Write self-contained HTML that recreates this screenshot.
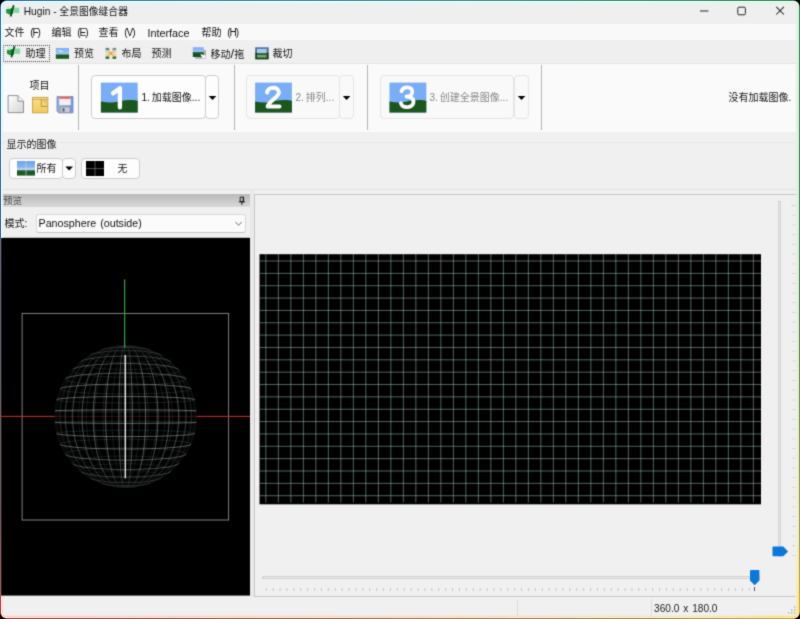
<!DOCTYPE html><html lang="zh"><head><meta charset="utf-8"><title>Hugin</title><style>
html,body{margin:0;padding:0;background:#000;}
body{width:800px;height:619px;overflow:hidden;position:relative;font-family:"Liberation Sans","Noto Sans CJK SC",sans-serif;}
#frame{position:absolute;left:0;top:0;width:800px;height:619px;border-radius:7px;overflow:hidden;
 background:
  linear-gradient(to right,#4a74b2,#5a87aa 25%,#58919a 50%,#559182 75%,#4c8f68) top/100% 3px no-repeat,
  linear-gradient(to right,#ac5450,#a55a50 12%,#a07d55 49%,#b09a56 84%,#d6b04a) bottom/100% 3px no-repeat,
  linear-gradient(to bottom,#4a74b2,#507da0 16%,#5a5a73 48%,#73505a 81%,#ac5450) left/3px 100% no-repeat,
  linear-gradient(to bottom,#4c8f68,#5f875f 48%,#aaa55a 88%,#d6b04a) right/3px 100% no-repeat,#777;}
#win{position:absolute;left:1px;top:1px;width:798px;height:617px;background:#f0f0f0;border-radius:6px;overflow:hidden;}
#c{position:absolute;left:-1px;top:-1px;width:800px;height:619px;background:#f0f0f0;will-change:transform;filter:url(#blr);}
.t{position:absolute;white-space:nowrap;line-height:1.3;word-spacing:1.1px;}
.cj{font-family:"Liberation Sans","Noto Sans CJK SC",sans-serif;}
</style></head><body><svg width="0" height="0" style="position:absolute"><filter id="blr" x="0" y="0" width="100%" height="100%" color-interpolation-filters="sRGB"><feConvolveMatrix order="3" kernelMatrix="1 4 1 4 20 4 1 4 1" divisor="40" edgeMode="duplicate" preserveAlpha="false"/></filter></svg><div id="frame"><div id="win"><div id="c"><div style="position:absolute;left:0px;top:0px;width:800px;height:24px;background:#efefef"></div><svg style="position:absolute;left:5px;top:5px;overflow:visible" width="15" height="13"><g transform="translate(0.8,0)"><rect x="7.6" y="2.7" width="5.9" height="5.3" fill="#86d8a2"/><path d="M0.3,4.2 L7.4,3.2 L7.2,8.6 L3.4,9.4 L0.4,8z" fill="#1d963a"/><path d="M4.5,3.6 L7.4,3.2 L7.2,8.6 L5,9z" fill="#0f7a2c"/><path d="M1.2,1.2 L5.4,2 L4.4,3.8 L1.4,3.6z" fill="#c4f0dc"/><path d="M7,0.1 L8.8,0.5 L5.7,11.8 L3.9,11.2z" fill="#0c4a1a"/></g></svg><div class="t" style="left:23.7px;top:4.5px;font-size:10.2px;color:#111;word-spacing:0;">Hugin - <span class="cj" style="font-size:9.8px">全景图像缝合器</span></div><svg style="position:absolute;left:699px;top:6px;overflow:visible" width="49" height="11"><path d="M1,5H9.4" stroke="#222" stroke-width="1"/><rect x="38.8" y="1.2" width="7.6" height="7.6" rx="1.2" fill="none" stroke="#222" stroke-width="1"/></svg><svg style="position:absolute;left:775px;top:6px;overflow:visible" width="10" height="10"><g transform="translate(0.8,0.4)"><path d="M0.5,0.5L8.1,8.1M8.1,0.5L0.5,8.1" stroke="#222" stroke-width="1.05"/></g></svg><div style="position:absolute;left:0px;top:24px;width:800px;height:15.5px;background:#f9f9f9"></div><div class="t" style="left:4.5px;top:25.5px;font-size:10px;color:#111;word-spacing:4px;line-height:14px;"><span class="cj">文件</span><span style="letter-spacing:-1.05px"> (F)</span></div><div class="t" style="left:51.5px;top:25.5px;font-size:10px;color:#111;word-spacing:4px;line-height:14px;"><span class="cj">编辑</span><span style="letter-spacing:-1.05px"> (E)</span></div><div class="t" style="left:98.5px;top:25.5px;font-size:10px;color:#111;word-spacing:4px;line-height:14px;"><span class="cj">查看</span><span style="letter-spacing:-1.05px"> (V)</span></div><div class="t" style="left:147.5px;top:25.5px;font-size:10.8px;color:#111;">Interface</div><div class="t" style="left:201.5px;top:25.5px;font-size:10px;color:#111;word-spacing:4px;line-height:14px;"><span class="cj">帮助</span><span style="letter-spacing:-1.05px"> (H)</span></div><div style="position:absolute;left:0px;top:39.5px;width:800px;height:24px;background:#efefef"></div><div style="position:absolute;left:3px;top:45px;width:46.8px;height:16.6px;border:1px dotted #4a4a4a;box-sizing:border-box"></div><svg style="position:absolute;left:6px;top:45px;overflow:visible" width="15" height="13"><g transform="translate(0.6,0.8)"><rect x="7.6" y="2.7" width="5.9" height="5.3" fill="#86d8a2"/><path d="M0.3,4.2 L7.4,3.2 L7.2,8.6 L3.4,9.4 L0.4,8z" fill="#1d963a"/><path d="M4.5,3.6 L7.4,3.2 L7.2,8.6 L5,9z" fill="#0f7a2c"/><path d="M1.2,1.2 L5.4,2 L4.4,3.8 L1.4,3.6z" fill="#c4f0dc"/><path d="M7,0.1 L8.8,0.5 L5.7,11.8 L3.9,11.2z" fill="#0c4a1a"/></g></svg><div class="t" style="left:25.5px;top:46.5px;font-size:10px;color:#111;"><span class="cj">助理</span></div><svg style="position:absolute;left:55px;top:48px;overflow:visible" width="15" height="11"><g transform="translate(0.8,0)"><defs><linearGradient id="sk55" x1="0" y1="0" x2="0" y2="1"><stop offset="0" stop-color="#79aef2"/><stop offset="1" stop-color="#a9cdf6"/></linearGradient></defs><rect width="13.2" height="6.98" fill="url(#sk55)"/><rect y="6.48" width="13.2" height="4.32" fill="#1b5a1f"/><path d="M2.5,2.5h3M4,3.6h3.5" stroke="#d8e8fb" stroke-width="0.9"/></g></svg><div class="t" style="left:74px;top:46.5px;font-size:10px;color:#111;"><span class="cj">预览</span></div><svg style="position:absolute;left:105px;top:47px;overflow:visible" width="12" height="13"><g transform="translate(0.3,0.7)"><rect x="0.2" y="0.4" width="10.8" height="10.6" fill="#f3ead0"/><rect x="0.3" y="2.4" width="3.6" height="6.4" fill="#d3e2b4"/><rect x="7.3" y="2.4" width="3.6" height="6.4" fill="#f2d4b6"/><rect x="0.3" y="0.2" width="3.6" height="2.3" fill="#5f7f9c"/><rect x="7.3" y="0.2" width="3.6" height="2.3" fill="#6f8fb4"/><rect x="0.3" y="8.7" width="3.6" height="2.5" fill="#3b6a2b"/><rect x="7.3" y="8.7" width="3.6" height="2.5" fill="#3b6a2b"/><path d="M2.6,2.8L8.6,8.6M8.6,2.8L2.6,8.6" stroke="#deb070" stroke-width="1.1"/><circle cx="5.6" cy="5.7" r="1.3" fill="#d4a058"/></g></svg><div class="t" style="left:121.5px;top:46.5px;font-size:10px;color:#111;"><span class="cj">布局</span></div><div class="t" style="left:151.5px;top:46.5px;font-size:10px;color:#111;"><span class="cj">预测</span></div><svg style="position:absolute;left:192px;top:47px;overflow:visible" width="15" height="12"><g transform="translate(0.8,0.3)"><rect x="2.4" y="2.6" width="10.8" height="8.9" fill="#9a9a9a" opacity="0.75"/><defs><linearGradient id="mv" x1="0" y1="0" x2="0" y2="1"><stop offset="0" stop-color="#7aa8f0"/><stop offset="1" stop-color="#a4c8f6"/></linearGradient></defs><rect width="10.9" height="5.4" fill="url(#mv)"/><rect y="5" width="10.9" height="4.7" fill="#16521c"/><rect y="5" width="10.9" height="1" fill="#2d6a4a"/><path d="M7.6,6.6 L12.6,8.2 L12.8,11 L10.4,11.2 L8.2,8.4z" fill="#f4fbf6"/></g></svg><div class="t" style="left:210.5px;top:46.5px;font-size:13px;color:#111;line-height:13px;"><span class="cj" style="font-size:10px">移动</span>/<span class="cj" style="font-size:10px">拖</span></div><svg style="position:absolute;left:255px;top:47px;overflow:visible" width="14" height="13"><g transform="translate(0.2,0.3)"><rect width="13.5" height="5.6" fill="#4f6f9f"/><rect y="5.4" width="13.5" height="6.7" fill="#173d17"/><rect x="1.8" y="1.6" width="9.6" height="4.4" fill="#a9c9f7"/><rect x="1.8" y="5.8" width="9.6" height="2.2" fill="#2f6a35"/><rect x="1.8" y="7.8" width="9.6" height="2.5" fill="#7aa87a"/></g></svg><div class="t" style="left:272.5px;top:46.5px;font-size:10px;color:#111;"><span class="cj">裁切</span></div><div style="position:absolute;left:2px;top:62.7px;width:794px;height:69.8px;background:#fafafa;border-top:1px solid #e4e4e4;box-sizing:border-box;border-radius:3px 0 0 0"></div><div style="position:absolute;left:78.1px;top:65px;width:1px;height:65px;background:#b4b4b4"></div><div style="position:absolute;left:233.5px;top:65px;width:1px;height:65px;background:#b4b4b4"></div><div style="position:absolute;left:367px;top:65px;width:1px;height:65px;background:#b4b4b4"></div><div style="position:absolute;left:540.8px;top:65px;width:1px;height:65px;background:#b4b4b4"></div><div class="t" style="left:29.5px;top:79px;font-size:10px;color:#111;"><span class="cj">项目</span></div><svg style="position:absolute;left:7px;top:95px;overflow:visible" width="18" height="19"><g transform="translate(0.5,0)"><defs><linearGradient id="ng" x1="0" y1="0" x2="1" y2="1"><stop offset="0" stop-color="#ffffff"/><stop offset="1" stop-color="#d4d4d4"/></linearGradient></defs><path d="M0.6,0.6 H10.5 L16,6.2 V17.6 H0.6z" fill="url(#ng)" stroke="#8f8f8f" stroke-width="1"/><path d="M10.5,0.6 V6.2 H16" fill="#f4f4f4" stroke="#8f8f8f" stroke-width="1"/></g></svg><svg style="position:absolute;left:32px;top:96px;overflow:visible" width="17" height="18"><g transform="translate(0,0.8)"><defs><linearGradient id="og" x1="0" y1="0" x2="0" y2="1"><stop offset="0" stop-color="#fbe08a"/><stop offset="1" stop-color="#f0c95c"/></linearGradient></defs><rect x="0.6" y="0.6" width="15.2" height="15.4" fill="url(#og)" stroke="#c7a44c" stroke-width="1"/><path d="M0.6,2.6H15.8" stroke="#c7a44c" stroke-width="0.9"/><path d="M9.3,2.6 V9.6 H15.8" fill="none" stroke="#b8953f" stroke-width="1"/><path d="M9.8,3.1 L15.3,9.1 V3.1z" fill="#e6c568"/></g></svg><svg style="position:absolute;left:56px;top:96px;overflow:visible" width="18" height="18"><g transform="translate(0.5,0)"><defs><linearGradient id="sg" x1="0" y1="0" x2="1" y2="0"><stop offset="0" stop-color="#9ab0dc"/><stop offset="1" stop-color="#6f97e6"/></linearGradient></defs><path d="M0.6,0.6 H16.4 V16.8 H2.2 L0.6,15.2z" fill="url(#sg)" stroke="#6d86b8" stroke-width="1"/><rect x="2.8" y="0.6" width="11.4" height="8.6" fill="#f6eef0"/><rect x="2.8" y="0.6" width="11.4" height="2.2" fill="#e0605f"/><rect x="3.8" y="11" width="9.6" height="5.6" fill="#c9ccd4" stroke="#8a8e9a" stroke-width="0.6"/><rect x="6" y="12.2" width="2" height="3.4" fill="#555a66"/></g></svg><div style="position:absolute;left:91.4px;top:75px;width:114.2px;height:44.4px;background:#fdfdfd;border:1px solid #cecece;border-radius:4px;box-sizing:border-box"></div><div style="position:absolute;left:205.1px;top:75px;width:14.3px;height:44.4px;background:#fdfdfd;border:1px solid #cecece;border-radius:4px;box-sizing:border-box"></div><svg style="position:absolute;left:100px;top:82px;overflow:visible" width="38" height="31"><g transform="translate(0.9,0.6)"><rect width="36.8" height="30" fill="#79adf7"/><path d="M0,18.9 C4,19.5 8,20.3 12,19.8 C18,19 24,17.3 30,17.5 C33,17.6 35,17.9 36.8,18.2 V30 H0z" fill="#1b561d"/><path d="M12.3,10.7 L19,5.7 V24.6" fill="none" stroke="#fff" stroke-width="4.4" stroke-linecap="round" stroke-linejoin="round"/></g></svg><div class="t" style="left:141.5px;top:91px;font-size:10px;color:#111;word-spacing:-0.8px;">1. <span class="cj">加载图像</span>...</div><svg style="position:absolute;left:208px;top:96px;overflow:visible" width="9" height="4"><g transform="translate(0.7,0)"><path d="M0,0H7.6L3.8,3.9z" fill="#000"/></g></svg><div style="position:absolute;left:245.6px;top:75px;width:94px;height:44.4px;background:#f9f9f9;border:1px solid #e5e5e5;border-radius:4px;box-sizing:border-box"></div><div style="position:absolute;left:339.1px;top:75px;width:14.5px;height:44.4px;background:#f9f9f9;border:1px solid #e5e5e5;border-radius:4px;box-sizing:border-box"></div><svg style="position:absolute;left:255px;top:82px;overflow:visible" width="37" height="31"><g transform="translate(0.1,0.6)"><rect width="36.8" height="30" fill="#79adf7"/><path d="M0,18.9 C4,19.5 8,20.3 12,19.8 C18,19 24,17.3 30,17.5 C33,17.6 35,17.9 36.8,18.2 V30 H0z" fill="#1b561d"/><path d="M12,10 C12.3,4 23.6,3.2 23.8,9.8 C23.9,14.4 13.3,18.6 12.5,24 H24.4" fill="none" stroke="#fff" stroke-width="4" stroke-linecap="round" stroke-linejoin="round"/></g></svg><div class="t" style="left:295.5px;top:91px;font-size:10px;color:#888;word-spacing:-0.8px;">2. <span class="cj">排列</span>...</div><svg style="position:absolute;left:342px;top:96px;overflow:visible" width="9" height="4"><g transform="translate(0.8,0)"><path d="M0,0H7.6L3.8,3.9z" fill="#000"/></g></svg><div style="position:absolute;left:380px;top:75px;width:134.3px;height:44.4px;background:#f9f9f9;border:1px solid #e5e5e5;border-radius:4px;box-sizing:border-box"></div><div style="position:absolute;left:513.8px;top:75px;width:15px;height:44.4px;background:#f9f9f9;border:1px solid #e5e5e5;border-radius:4px;box-sizing:border-box"></div><svg style="position:absolute;left:389px;top:82px;overflow:visible" width="38" height="31"><g transform="translate(0.5,0.6)"><rect width="36.8" height="30" fill="#79adf7"/><path d="M0,18.9 C4,19.5 8,20.3 12,19.8 C18,19 24,17.3 30,17.5 C33,17.6 35,17.9 36.8,18.2 V30 H0z" fill="#1b561d"/><path d="M12,8.6 C13.5,3.3 23,3.2 22.8,9.4 C22.6,13 19,13.9 17,13.9 C20,13.9 24.2,15.2 24,19.6 C23.7,25.7 13,26.1 11.4,20.6" fill="none" stroke="#fff" stroke-width="3.8" stroke-linecap="round" stroke-linejoin="round"/></g></svg><div class="t" style="left:429.5px;top:91px;font-size:10px;color:#888;word-spacing:-0.8px;">3. <span class="cj">创建全景图像</span>...</div><svg style="position:absolute;left:517px;top:96px;overflow:visible" width="9" height="4"><g transform="translate(0.75,0)"><path d="M0,0H7.6L3.8,3.9z" fill="#000"/></g></svg><div class="t" style="left:728.5px;top:90.5px;font-size:10px;color:#111;"><span class="cj">没有加载图像</span>.</div><div style="position:absolute;left:2px;top:142px;width:794px;height:1px;background:#e6e6e6"></div><div style="position:absolute;left:2px;top:188.5px;width:794px;height:1px;background:#e2e2e2"></div><div class="t" style="left:6.5px;top:137.5px;font-size:10px;color:#111;background:#f0f0f0;padding-right:2px;"><span class="cj">显示的图像</span></div><div style="position:absolute;left:9px;top:157.6px;width:53.6px;height:21.6px;background:#fdfdfd;border:1px solid #cdcdcd;border-radius:4px;box-sizing:border-box"></div><div style="position:absolute;left:62.2px;top:157.6px;width:13.8px;height:21.6px;background:#fdfdfd;border:1px solid #cdcdcd;border-radius:4px;box-sizing:border-box"></div><div style="position:absolute;left:80.6px;top:157.6px;width:59.6px;height:21.6px;background:#fdfdfd;border:1px solid #cdcdcd;border-radius:4px;box-sizing:border-box"></div><svg style="position:absolute;left:17px;top:161px;overflow:visible" width="19" height="15"><defs><linearGradient id="ag" x1="0" y1="0" x2="0" y2="1"><stop offset="0" stop-color="#6fa2ee"/><stop offset="0.6" stop-color="#86b4f2"/><stop offset="1" stop-color="#bcd6f6"/></linearGradient></defs><rect width="18" height="9.5" fill="url(#ag)"/><rect y="9.3" width="18" height="5.3" fill="#1b5a1f"/><path d="M9,0V14.6M0,7.6H18" stroke="#cfd8e4" stroke-width="0.8" opacity="0.8"/></svg><div class="t" style="left:36.6px;top:162px;font-size:10px;color:#111;"><span class="cj">所有</span></div><svg style="position:absolute;left:65px;top:166px;overflow:visible" width="9" height="5"><g transform="translate(0.3,0.5)"><path d="M0,0H7.8L3.9,4.1z" fill="#000"/></g></svg><svg style="position:absolute;left:86px;top:161px;overflow:visible" width="19" height="16"><rect width="18" height="15" fill="#000"/><path d="M9,0V15M0,7.6H18" stroke="#6a6a6a" stroke-width="0.8"/></svg><div class="t" style="left:117.5px;top:162px;font-size:10px;color:#111;"><span class="cj">无</span></div><div style="position:absolute;left:1px;top:193.8px;width:249px;height:13.6px;background:linear-gradient(#b9b9b9,#d9d9d9)"></div><div class="t" style="left:3px;top:195px;font-size:9.6px;color:#505050;"><span class="cj">预览</span></div><svg style="position:absolute;left:238px;top:196px;overflow:visible" width="9" height="10"><g transform="translate(0,0.5)"><path d="M2.2,0.6H5.6V5.2H2.2zM0.8,5.4H7M3.9,5.4V8.6M5.2,0.6V5.2" fill="none" stroke="#111" stroke-width="0.9"/></g></svg><div class="t" style="left:4.5px;top:217px;font-size:10px;color:#111;"><span class="cj">模式</span>:</div><div style="position:absolute;left:36px;top:213.5px;width:209.5px;height:19.6px;background:#fbfbfb;border:1px solid #dadada;border-bottom-color:#c4c4c4;border-radius:3px;box-sizing:border-box"></div><div class="t" style="left:38.5px;top:217.3px;font-size:10.7px;color:#111;">Panosphere (outside)</div><svg style="position:absolute;left:235px;top:221px;overflow:visible" width="8" height="5"><g transform="translate(0,0.5)"><path d="M0.4,0.5L3.6,3.7L6.8,0.5" fill="none" stroke="#555" stroke-width="0.9"/></g></svg><svg style="position:absolute;left:1px;top:237px;overflow:visible" width="250" height="359"><g transform="translate(0,0.8)"><defs><radialGradient id="rg" gradientUnits="userSpaceOnUse" cx="125.6" cy="416.6" r="70.9636"><stop offset="0.00" stop-color="#fff" stop-opacity="1.00"/><stop offset="0.10" stop-color="#fff" stop-opacity="0.99"/><stop offset="0.20" stop-color="#fff" stop-opacity="0.98"/><stop offset="0.30" stop-color="#fff" stop-opacity="0.95"/><stop offset="0.40" stop-color="#fff" stop-opacity="0.92"/><stop offset="0.50" stop-color="#fff" stop-opacity="0.87"/><stop offset="0.60" stop-color="#fff" stop-opacity="0.80"/><stop offset="0.70" stop-color="#fff" stop-opacity="0.71"/><stop offset="0.80" stop-color="#fff" stop-opacity="0.60"/><stop offset="0.90" stop-color="#fff" stop-opacity="0.44"/><stop offset="1.00" stop-color="#fff" stop-opacity="0.10"/></radialGradient><linearGradient id="lg" gradientUnits="userSpaceOnUse" x1="0" y1="345.636" x2="0" y2="487.564"><stop offset="0.00" stop-color="#fff" stop-opacity="0.22"/><stop offset="0.06" stop-color="#fff" stop-opacity="0.48"/><stop offset="0.12" stop-color="#fff" stop-opacity="0.66"/><stop offset="0.19" stop-color="#fff" stop-opacity="0.78"/><stop offset="0.25" stop-color="#fff" stop-opacity="0.87"/><stop offset="0.31" stop-color="#fff" stop-opacity="0.93"/><stop offset="0.38" stop-color="#fff" stop-opacity="0.97"/><stop offset="0.44" stop-color="#fff" stop-opacity="0.99"/><stop offset="0.50" stop-color="#fff" stop-opacity="1.00"/><stop offset="0.56" stop-color="#fff" stop-opacity="0.99"/><stop offset="0.62" stop-color="#fff" stop-opacity="0.97"/><stop offset="0.69" stop-color="#fff" stop-opacity="0.93"/><stop offset="0.75" stop-color="#fff" stop-opacity="0.87"/><stop offset="0.81" stop-color="#fff" stop-opacity="0.78"/><stop offset="0.88" stop-color="#fff" stop-opacity="0.66"/><stop offset="0.94" stop-color="#fff" stop-opacity="0.48"/><stop offset="1.00" stop-color="#fff" stop-opacity="0.22"/></linearGradient><mask id="mr" maskUnits="userSpaceOnUse" x="40" y="330" width="180" height="180"><rect x="40" y="330" width="180" height="180" fill="url(#rg)"/></mask><mask id="ml" maskUnits="userSpaceOnUse" x="40" y="330" width="180" height="180"><rect x="40" y="330" width="180" height="180" fill="url(#lg)"/></mask></defs><rect width="249" height="357.8" fill="#000"/><g transform="translate(-1,-237.8)"><rect x="22.1" y="313.4" width="206.5" height="206.6" fill="none" stroke="#8c8c8c" stroke-width="0.9"/><path d="M0,416.4H54.5M196.5,416.4H250" stroke="#d42a2a" stroke-width="1"/><path d="M54.5,416.4H196.5" stroke="#7a1616" stroke-width="1" opacity="0.5"/><path d="M124.7,279.4V347.5" stroke="#3fc33f" stroke-width="1"/><path d="M124.7,347.5V416" stroke="#1f5a1f" stroke-width="1" opacity="0.4"/><g fill="none" stroke="#cfe4dd"><g mask="url(#ml)"><path d="M125.6,485.0 125.2,485.0 124.8,485.0 124.3,485.0 123.9,485.0 123.5,485.1 123.2,485.1 122.8,485.1 122.4,485.2 122.1,485.2 121.8,485.3 121.5,485.3 121.2,485.4 121.0,485.5 120.8,485.5 120.6,485.6 120.4,485.7 120.3,485.8 120.2,485.9 120.2,485.9 120.1,486.0 120.1,486.1 120.2,486.2 120.3,486.3 120.4,486.3 120.5,486.4 120.7,486.5 120.9,486.6 121.1,486.6 121.4,486.7 121.7,486.8 122.0,486.8 122.3,486.9 122.7,486.9 123.1,487.0 123.5,487.0 123.9,487.0 124.3,487.1 124.7,487.1 125.2,487.1 125.6,487.1 126.0,487.1 126.5,487.1 126.9,487.1 127.3,487.0 127.7,487.0 128.1,487.0 128.5,486.9 128.9,486.9 129.2,486.8 129.5,486.8 129.8,486.7 130.1,486.6 130.3,486.6 130.5,486.5 130.7,486.4 130.8,486.3 130.9,486.3 131.0,486.2 131.1,486.1 131.1,486.0 131.0,485.9 131.0,485.9 130.9,485.8 130.8,485.7 130.6,485.6 130.4,485.5 130.2,485.5 130.0,485.4 129.7,485.3 129.4,485.3 129.1,485.2 128.8,485.2 128.4,485.1 128.0,485.1 127.7,485.1 127.3,485.0 126.9,485.0 126.4,485.0 126.0,485.0 125.6,485.0M125.6,481.4 124.4,481.4 123.2,481.4 122.0,481.5 120.8,481.5 119.6,481.6 118.5,481.7 117.4,481.8 116.4,481.9 115.4,482.1 114.5,482.2 113.6,482.4 112.8,482.6 112.1,482.8 111.4,483.0 110.8,483.2 110.4,483.4 110.0,483.6 109.7,483.8 109.5,484.1 109.3,484.3 109.3,484.5 109.4,484.8 109.6,485.0 109.9,485.3 110.3,485.5 110.8,485.7 111.4,485.9 112.1,486.1 112.9,486.3 113.7,486.5 114.7,486.7 115.7,486.9 116.8,487.0M135.5,486.9 136.5,486.7 137.5,486.5 138.3,486.3 139.1,486.1 139.8,485.9 140.4,485.7 140.9,485.5 141.3,485.3 141.6,485.0 141.8,484.8 141.9,484.5 141.9,484.3 141.7,484.1 141.5,483.8 141.2,483.6 140.8,483.4 140.4,483.2 139.8,483.0 139.1,482.8 138.4,482.6 137.6,482.4 136.7,482.2 135.8,482.1 134.8,481.9 133.8,481.8 132.7,481.7 131.6,481.6 130.4,481.5 129.2,481.5 128.0,481.4 126.8,481.4 125.6,481.4M125.6,476.5 123.7,476.5 121.7,476.6 119.8,476.6 117.9,476.7 116.1,476.8 114.2,477.0 112.5,477.1 110.8,477.3 109.2,477.5 107.7,477.7 106.3,478.0 104.9,478.3 103.7,478.5 102.6,478.8 101.7,479.2 100.8,479.5 100.1,479.8 99.6,480.2 99.2,480.6 99.0,480.9 98.9,481.3 99.0,481.7 99.2,482.1 99.7,482.4 100.3,482.8 101.0,483.2 102.0,483.5M150.2,483.2 150.9,482.8 151.5,482.4 152.0,482.1 152.2,481.7 152.3,481.3 152.2,480.9 152.0,480.6 151.6,480.2 151.1,479.8 150.4,479.5 149.5,479.2 148.6,478.8 147.5,478.5 146.3,478.3 144.9,478.0 143.5,477.7 142.0,477.5 140.4,477.3 138.7,477.1 137.0,477.0 135.1,476.8 133.3,476.7 131.4,476.6 129.5,476.6 127.5,476.5 125.6,476.5M125.6,470.5 123.0,470.6 120.4,470.6 117.9,470.7 115.3,470.8 112.9,470.9 110.4,471.1 108.1,471.3 105.8,471.5 103.7,471.8 101.6,472.0 99.6,472.3 97.8,472.7 96.1,473.0 94.6,473.4 93.2,473.8 92.0,474.2 91.0,474.6 90.2,475.1 89.6,475.5 89.2,476.0 89.0,476.4 89.1,476.9 89.4,477.4 89.9,477.9 90.6,478.4M161.3,477.9 161.8,477.4 162.1,476.9 162.2,476.4 162.0,476.0 161.6,475.5 161.0,475.1 160.2,474.6 159.2,474.2 158.0,473.8 156.6,473.4 155.1,473.0 153.4,472.7 151.6,472.3 149.6,472.0 147.5,471.8 145.4,471.5 143.1,471.3 140.8,471.1 138.3,470.9 135.9,470.8 133.3,470.7 130.8,470.6 128.2,470.6 125.6,470.5M125.6,463.7 122.4,463.7 119.3,463.7 116.2,463.8 113.1,463.9 110.1,464.1 107.1,464.2 104.2,464.4 101.5,464.7 98.8,464.9 96.2,465.2 93.8,465.6 91.5,465.9 89.4,466.3 87.5,466.7 85.7,467.1 84.2,467.6 82.9,468.0 81.8,468.5 81.0,469.0 80.4,469.6 80.1,470.1 80.0,470.6 80.3,471.1 80.9,471.7M170.9,471.1 171.2,470.6 171.1,470.1 170.8,469.6 170.2,469.0 169.4,468.5 168.3,468.0 167.0,467.6 165.5,467.1 163.7,466.7 161.8,466.3 159.7,465.9 157.4,465.6 155.0,465.2 152.4,464.9 149.7,464.7 147.0,464.4 144.1,464.2 141.1,464.1 138.1,463.9 135.0,463.8 131.9,463.7 128.8,463.7 125.6,463.7M125.6,456.0 122.0,456.1 118.4,456.1 114.8,456.2 111.2,456.3 107.8,456.4 104.3,456.6 101.0,456.8 97.8,457.0 94.7,457.3 91.7,457.6 88.8,457.9 86.2,458.2 83.7,458.6 81.4,459.0 79.3,459.4 77.4,459.9 75.8,460.3 74.5,460.8 73.4,461.3 72.6,461.8 72.2,462.3 72.1,462.9 72.3,463.4 72.9,464.0M178.9,463.4 179.1,462.9 179.0,462.3 178.6,461.8 177.8,461.3 176.7,460.8 175.4,460.3 173.8,459.9 171.9,459.4 169.8,459.0 167.5,458.6 165.0,458.2 162.4,457.9 159.5,457.6 156.5,457.3 153.4,457.0 150.2,456.8 146.9,456.6 143.4,456.4 140.0,456.3 136.4,456.2 132.8,456.1 129.2,456.1 125.6,456.0M125.6,447.8 121.6,447.9 117.6,447.9 113.6,448.0 109.7,448.1 105.9,448.2 102.1,448.3 98.4,448.5 94.8,448.7 91.3,448.9 88.0,449.2 84.8,449.5 81.8,449.8 79.0,450.1 76.4,450.5 74.0,450.8 71.9,451.2 70.0,451.6 68.4,452.1 67.2,452.5 66.2,453.0 65.6,453.5 65.4,453.9 65.6,454.4M185.8,453.9 185.6,453.5 185.0,453.0 184.0,452.5 182.8,452.1 181.2,451.6 179.3,451.2 177.2,450.8 174.8,450.5 172.2,450.1 169.4,449.8 166.4,449.5 163.2,449.2 159.9,448.9 156.4,448.7 152.8,448.5 149.1,448.3 145.3,448.2 141.5,448.1 137.6,448.0 133.6,447.9 129.6,447.9 125.6,447.8M125.6,439.2 121.3,439.2 117.0,439.3 112.8,439.3 108.6,439.4 104.5,439.5 100.4,439.6 96.4,439.7 92.5,439.9 88.8,440.1 85.2,440.3 81.8,440.5 78.5,440.7 75.4,441.0 72.6,441.3 70.0,441.5 67.6,441.9 65.5,442.2 63.8,442.5 62.3,442.9 61.3,443.2 60.6,443.6 60.2,444.0 60.3,444.4M191.0,444.0 190.6,443.6 189.9,443.2 188.9,442.9 187.4,442.5 185.7,442.2 183.6,441.9 181.2,441.5 178.6,441.3 175.8,441.0 172.7,440.7 169.4,440.5 166.0,440.3 162.4,440.1 158.7,439.9 154.8,439.7 150.8,439.6 146.7,439.5 142.6,439.4 138.4,439.3 134.2,439.3 129.9,439.2 125.6,439.2M125.6,430.3 121.1,430.3 116.7,430.3 112.2,430.4 107.8,430.4 103.5,430.5 99.3,430.5 95.1,430.6 91.0,430.7 87.1,430.8 83.3,431.0 79.7,431.1 76.3,431.2 73.0,431.4 70.0,431.6 67.2,431.8 64.7,432.0 62.5,432.2 60.6,432.4 59.1,432.6 57.9,432.9 57.1,433.1 56.7,433.3 56.7,433.6M194.5,433.3 194.1,433.1 193.3,432.9 192.1,432.6 190.6,432.4 188.7,432.2 186.5,432.0 184.0,431.8 181.2,431.6 178.2,431.4 174.9,431.2 171.5,431.1 167.9,431.0 164.1,430.8 160.2,430.7 156.1,430.6 151.9,430.5 147.7,430.5 143.4,430.4 139.0,430.4 134.5,430.3 130.1,430.3 125.6,430.3M125.6,421.2 121.0,421.2 116.5,421.2 111.9,421.2 107.5,421.2 103.0,421.2 98.7,421.3 94.4,421.3 90.3,421.3 86.3,421.4 82.4,421.4 78.7,421.5 75.1,421.5 71.8,421.6 68.7,421.6 65.9,421.7 63.3,421.8 61.0,421.8 59.0,421.9 57.4,422.0 56.2,422.1 55.3,422.1 54.9,422.2 54.9,422.3M196.3,422.2 195.9,422.1 195.0,422.1 193.8,422.0 192.2,421.9 190.2,421.8 187.9,421.8 185.3,421.7 182.5,421.6 179.4,421.6 176.1,421.5 172.5,421.5 168.8,421.4 164.9,421.4 160.9,421.3 156.8,421.3 152.5,421.3 148.2,421.2 143.7,421.2 139.3,421.2 134.7,421.2 130.2,421.2 125.6,421.2M125.6,412.0 121.0,412.0 116.5,412.0 111.9,412.0 107.5,412.0 103.0,412.0 98.7,411.9 94.4,411.9 90.3,411.9 86.3,411.8 82.4,411.8 78.7,411.7 75.1,411.7 71.8,411.6 68.7,411.6 65.9,411.5 63.3,411.4 61.0,411.4 59.0,411.3 57.4,411.2 56.2,411.1 55.3,411.1 54.9,411.0 54.9,410.9M196.3,411.0 195.9,411.1 195.0,411.1 193.8,411.2 192.2,411.3 190.2,411.4 187.9,411.4 185.3,411.5 182.5,411.6 179.4,411.6 176.1,411.7 172.5,411.7 168.8,411.8 164.9,411.8 160.9,411.9 156.8,411.9 152.5,411.9 148.2,412.0 143.7,412.0 139.3,412.0 134.7,412.0 130.2,412.0 125.6,412.0M125.6,402.9 121.1,402.9 116.7,402.9 112.2,402.8 107.8,402.8 103.5,402.7 99.3,402.7 95.1,402.6 91.0,402.5 87.1,402.4 83.3,402.2 79.7,402.1 76.3,402.0 73.0,401.8 70.0,401.6 67.2,401.4 64.7,401.2 62.5,401.0 60.6,400.8 59.1,400.6 57.9,400.3 57.1,400.1 56.7,399.9 56.7,399.6M194.5,399.9 194.1,400.1 193.3,400.3 192.1,400.6 190.6,400.8 188.7,401.0 186.5,401.2 184.0,401.4 181.2,401.6 178.2,401.8 174.9,402.0 171.5,402.1 167.9,402.2 164.1,402.4 160.2,402.5 156.1,402.6 151.9,402.7 147.7,402.7 143.4,402.8 139.0,402.8 134.5,402.9 130.1,402.9 125.6,402.9M125.6,394.0 121.3,394.0 117.0,393.9 112.8,393.9 108.6,393.8 104.5,393.7 100.4,393.6 96.4,393.5 92.5,393.3 88.8,393.1 85.2,392.9 81.8,392.7 78.5,392.5 75.4,392.2 72.6,391.9 70.0,391.7 67.6,391.3 65.5,391.0 63.8,390.7 62.3,390.3 61.3,390.0 60.6,389.6 60.2,389.2 60.3,388.8M191.0,389.2 190.6,389.6 189.9,390.0 188.9,390.3 187.4,390.7 185.7,391.0 183.6,391.3 181.2,391.7 178.6,391.9 175.8,392.2 172.7,392.5 169.4,392.7 166.0,392.9 162.4,393.1 158.7,393.3 154.8,393.5 150.8,393.6 146.7,393.7 142.6,393.8 138.4,393.9 134.2,393.9 129.9,394.0 125.6,394.0M125.6,385.4 121.6,385.3 117.6,385.3 113.6,385.2 109.7,385.1 105.9,385.0 102.1,384.9 98.4,384.7 94.8,384.5 91.3,384.3 88.0,384.0 84.8,383.7 81.8,383.4 79.0,383.1 76.4,382.7 74.0,382.4 71.9,382.0 70.0,381.6 68.4,381.1 67.2,380.7 66.2,380.2 65.6,379.7 65.4,379.3 65.6,378.8M185.8,379.3 185.6,379.7 185.0,380.2 184.0,380.7 182.8,381.1 181.2,381.6 179.3,382.0 177.2,382.4 174.8,382.7 172.2,383.1 169.4,383.4 166.4,383.7 163.2,384.0 159.9,384.3 156.4,384.5 152.8,384.7 149.1,384.9 145.3,385.0 141.5,385.1 137.6,385.2 133.6,385.3 129.6,385.3 125.6,385.4M125.6,377.2 122.0,377.1 118.4,377.1 114.8,377.0 111.2,376.9 107.8,376.8 104.3,376.6 101.0,376.4 97.8,376.2 94.7,375.9 91.7,375.6 88.8,375.3 86.2,375.0 83.7,374.6 81.4,374.2 79.3,373.8 77.4,373.3 75.8,372.9 74.5,372.4 73.4,371.9 72.6,371.4 72.2,370.9 72.1,370.3 72.3,369.8 72.9,369.2M178.9,369.8 179.1,370.3 179.0,370.9 178.6,371.4 177.8,371.9 176.7,372.4 175.4,372.9 173.8,373.3 171.9,373.8 169.8,374.2 167.5,374.6 165.0,375.0 162.4,375.3 159.5,375.6 156.5,375.9 153.4,376.2 150.2,376.4 146.9,376.6 143.4,376.8 140.0,376.9 136.4,377.0 132.8,377.1 129.2,377.1 125.6,377.2M125.6,369.5 122.4,369.5 119.3,369.5 116.2,369.4 113.1,369.3 110.1,369.1 107.1,369.0 104.2,368.8 101.5,368.5 98.8,368.3 96.2,368.0 93.8,367.6 91.5,367.3 89.4,366.9 87.5,366.5 85.7,366.1 84.2,365.6 82.9,365.2 81.8,364.7 81.0,364.2 80.4,363.6 80.1,363.1 80.0,362.6 80.3,362.1 80.9,361.5M170.9,362.1 171.2,362.6 171.1,363.1 170.8,363.6 170.2,364.2 169.4,364.7 168.3,365.2 167.0,365.6 165.5,366.1 163.7,366.5 161.8,366.9 159.7,367.3 157.4,367.6 155.0,368.0 152.4,368.3 149.7,368.5 147.0,368.8 144.1,369.0 141.1,369.1 138.1,369.3 135.0,369.4 131.9,369.5 128.8,369.5 125.6,369.5M125.6,362.7 123.0,362.6 120.4,362.6 117.9,362.5 115.3,362.4 112.9,362.3 110.4,362.1 108.1,361.9 105.8,361.7 103.7,361.4 101.6,361.2 99.6,360.9 97.8,360.5 96.1,360.2 94.6,359.8 93.2,359.4 92.0,359.0 91.0,358.6 90.2,358.1 89.6,357.7 89.2,357.2 89.0,356.8 89.1,356.3 89.4,355.8 89.9,355.3 90.6,354.8M161.3,355.3 161.8,355.8 162.1,356.3 162.2,356.8 162.0,357.2 161.6,357.7 161.0,358.1 160.2,358.6 159.2,359.0 158.0,359.4 156.6,359.8 155.1,360.2 153.4,360.5 151.6,360.9 149.6,361.2 147.5,361.4 145.4,361.7 143.1,361.9 140.8,362.1 138.3,362.3 135.9,362.4 133.3,362.5 130.8,362.6 128.2,362.6 125.6,362.7M125.6,356.7 123.7,356.7 121.7,356.6 119.8,356.6 117.9,356.5 116.1,356.4 114.2,356.2 112.5,356.1 110.8,355.9 109.2,355.7 107.7,355.5 106.3,355.2 104.9,354.9 103.7,354.7 102.6,354.4 101.7,354.0 100.8,353.7 100.1,353.4 99.6,353.0 99.2,352.6 99.0,352.3 98.9,351.9 99.0,351.5 99.2,351.1 99.7,350.8 100.3,350.4 101.0,350.0 102.0,349.7M150.2,350.0 150.9,350.4 151.5,350.8 152.0,351.1 152.2,351.5 152.3,351.9 152.2,352.3 152.0,352.6 151.6,353.0 151.1,353.4 150.4,353.7 149.5,354.0 148.6,354.4 147.5,354.7 146.3,354.9 144.9,355.2 143.5,355.5 142.0,355.7 140.4,355.9 138.7,356.1 137.0,356.2 135.1,356.4 133.3,356.5 131.4,356.6 129.5,356.6 127.5,356.7 125.6,356.7M125.6,351.8 124.4,351.8 123.2,351.8 122.0,351.7 120.8,351.7 119.6,351.6 118.5,351.5 117.4,351.4 116.4,351.3 115.4,351.1 114.5,351.0 113.6,350.8 112.8,350.6 112.1,350.4 111.4,350.2 110.8,350.0 110.4,349.8 110.0,349.6 109.7,349.4 109.5,349.1 109.3,348.9 109.3,348.7 109.4,348.4 109.6,348.2 109.9,347.9 110.3,347.7 110.8,347.5 111.4,347.3 112.1,347.1 112.9,346.9 113.7,346.7 114.7,346.5 115.7,346.3 116.8,346.2M135.5,346.3 136.5,346.5 137.5,346.7 138.3,346.9 139.1,347.1 139.8,347.3 140.4,347.5 140.9,347.7 141.3,347.9 141.6,348.2 141.8,348.4 141.9,348.7 141.9,348.9 141.7,349.1 141.5,349.4 141.2,349.6 140.8,349.8 140.4,350.0 139.8,350.2 139.1,350.4 138.4,350.6 137.6,350.8 136.7,351.0 135.8,351.1 134.8,351.3 133.8,351.4 132.7,351.5 131.6,351.6 130.4,351.7 129.2,351.7 128.0,351.8 126.8,351.8 125.6,351.8M125.6,348.2 125.2,348.2 124.8,348.2 124.3,348.2 123.9,348.2 123.5,348.1 123.2,348.1 122.8,348.1 122.4,348.0 122.1,348.0 121.8,347.9 121.5,347.9 121.2,347.8 121.0,347.7 120.8,347.7 120.6,347.6 120.4,347.5 120.3,347.4 120.2,347.3 120.2,347.3 120.1,347.2 120.1,347.1 120.2,347.0 120.3,346.9 120.4,346.9 120.5,346.8 120.7,346.7 120.9,346.6 121.1,346.6 121.4,346.5 121.7,346.4 122.0,346.4 122.3,346.3 122.7,346.3 123.1,346.2 123.5,346.2 123.9,346.2 124.3,346.1 124.7,346.1 125.2,346.1 125.6,346.1 126.0,346.1 126.5,346.1 126.9,346.1 127.3,346.2 127.7,346.2 128.1,346.2 128.5,346.3 128.9,346.3 129.2,346.4 129.5,346.4 129.8,346.5 130.1,346.6 130.3,346.6 130.5,346.7 130.7,346.8 130.8,346.9 130.9,346.9 131.0,347.0 131.1,347.1 131.1,347.2 131.0,347.3 131.0,347.3 130.9,347.4 130.8,347.5 130.6,347.6 130.4,347.7 130.2,347.7 130.0,347.8 129.7,347.9 129.4,347.9 129.1,348.0 128.8,348.0 128.4,348.1 128.0,348.1 127.7,348.1 127.3,348.2 126.9,348.2 126.4,348.2 126.0,348.2 125.6,348.2" stroke-width="0.8" opacity="0.16"/><path d="M116.8,487.0 117.9,487.1 119.1,487.2 120.4,487.3 121.6,487.4 122.9,487.5 124.3,487.5 125.6,487.5 126.9,487.5 128.3,487.5 129.6,487.4 130.8,487.3 132.1,487.2 133.3,487.1 134.4,487.0 135.5,486.9M102.0,483.5 103.1,483.8 104.3,484.2 105.7,484.5 107.3,484.8 108.9,485.0 110.7,485.2 112.7,485.5 114.7,485.6 116.7,485.8 118.9,485.9 121.1,486.0 123.3,486.0 125.6,486.1 127.9,486.0 130.1,486.0 132.3,485.9 134.5,485.8 136.5,485.6 138.5,485.5 140.5,485.2 142.3,485.0 143.9,484.8 145.5,484.5 146.9,484.2 148.1,483.8 149.2,483.5 150.2,483.2M90.6,478.4 91.6,478.8 92.9,479.3 94.3,479.7 96.0,480.1 97.9,480.5 100.0,480.9 102.3,481.2 104.8,481.5 107.5,481.8 110.2,482.1 113.2,482.3 116.2,482.4 119.3,482.5 122.4,482.6 125.6,482.6 128.8,482.6 131.9,482.5 135.0,482.4 138.0,482.3 141.0,482.1 143.7,481.8 146.4,481.5 148.9,481.2 151.2,480.9 153.3,480.5 155.2,480.1 156.9,479.7 158.3,479.3 159.6,478.8 160.6,478.4 161.3,477.9M80.9,471.7 81.7,472.2 82.9,472.7 84.3,473.3 86.1,473.8 88.2,474.2 90.5,474.7 93.1,475.1 96.0,475.5 99.1,475.9 102.5,476.2 106.0,476.5 109.7,476.7 113.6,476.9 117.5,477.0 121.5,477.1 125.6,477.1 129.7,477.1 133.7,477.0 137.6,476.9 141.5,476.7 145.2,476.5 148.7,476.2 152.1,475.9 155.2,475.5 158.1,475.1 160.7,474.7 163.0,474.2 165.1,473.8 166.9,473.3 168.3,472.7 169.5,472.2 170.3,471.7 170.9,471.1M72.9,464.0 73.8,464.5 75.1,465.0 76.7,465.6 78.7,466.1 81.1,466.6 83.8,467.1 86.9,467.5 90.3,467.9 94.0,468.3 98.0,468.6 102.2,468.9 106.6,469.1 111.2,469.3 115.9,469.5 120.7,469.6 125.6,469.6 130.5,469.6 135.3,469.5 140.0,469.3 144.6,469.1 149.0,468.9 153.2,468.6 157.2,468.3 160.9,467.9 164.3,467.5 167.4,467.1 170.1,466.6 172.5,466.1 174.5,465.6 176.1,465.0 177.4,464.5 178.3,464.0 178.9,463.4M65.6,454.4 66.1,454.9 67.1,455.4 68.4,455.9 70.2,456.4 72.4,456.9 75.1,457.3 78.1,457.8 81.5,458.2 85.4,458.6 89.5,458.9 94.0,459.2 98.8,459.5 103.9,459.7 109.1,459.9 114.5,460.0 120.0,460.1 125.6,460.1 131.2,460.1 136.7,460.0 142.1,459.9 147.3,459.7 152.4,459.5 157.2,459.2 161.7,458.9 165.8,458.6 169.7,458.2 173.1,457.8 176.1,457.3 178.8,456.9 181.0,456.4 182.8,455.9 184.1,455.4 185.1,454.9 185.6,454.4 185.8,453.9M60.3,444.4 60.9,444.8 61.8,445.2 63.2,445.6 65.1,446.0 67.5,446.4 70.3,446.7 73.6,447.1 77.3,447.4 81.4,447.7 86.0,448.0 90.9,448.3 96.1,448.5 101.7,448.7 107.4,448.8 113.4,448.9 119.5,449.0 125.6,449.0 131.7,449.0 137.8,448.9 143.8,448.8 149.5,448.7 155.1,448.5 160.3,448.3 165.2,448.0 169.8,447.7 173.9,447.4 177.6,447.1 180.9,446.7 183.7,446.4 186.1,446.0 188.0,445.6 189.4,445.2 190.3,444.8 190.9,444.4 191.0,444.0M56.7,433.6 57.2,433.9 58.2,434.1 59.7,434.4 61.6,434.6 64.0,434.9 67.0,435.1 70.4,435.3 74.3,435.6 78.7,435.8 83.5,435.9 88.7,436.1 94.3,436.3 100.1,436.4 106.3,436.5 112.6,436.5 119.1,436.6 125.6,436.6 132.1,436.6 138.6,436.5 144.9,436.5 151.1,436.4 156.9,436.3 162.5,436.1 167.7,435.9 172.5,435.8 176.9,435.6 180.8,435.3 184.2,435.1 187.2,434.9 189.6,434.6 191.5,434.4 193.0,434.1 194.0,433.9 194.5,433.6 194.5,433.3M54.9,422.3 55.4,422.4 56.4,422.5 57.8,422.6 59.8,422.7 62.3,422.8 65.3,422.8 68.8,422.9 72.8,423.0 77.3,423.1 82.2,423.1 87.6,423.2 93.3,423.2 99.4,423.3 105.7,423.3 112.2,423.3 118.9,423.4 125.6,423.4 132.3,423.4 139.0,423.3 145.5,423.3 151.8,423.3 157.9,423.2 163.6,423.2 169.0,423.1 173.9,423.1 178.4,423.0 182.4,422.9 185.9,422.8 188.9,422.8 191.4,422.7 193.4,422.6 194.8,422.5 195.8,422.4 196.3,422.3 196.3,422.2M54.9,410.9 55.4,410.8 56.4,410.7 57.8,410.6 59.8,410.5 62.3,410.4 65.3,410.4 68.8,410.3 72.8,410.2 77.3,410.1 82.2,410.1 87.6,410.0 93.3,410.0 99.4,409.9 105.7,409.9 112.2,409.9 118.9,409.8 125.6,409.8 132.3,409.8 139.0,409.9 145.5,409.9 151.8,409.9 157.9,410.0 163.6,410.0 169.0,410.1 173.9,410.1 178.4,410.2 182.4,410.3 185.9,410.4 188.9,410.4 191.4,410.5 193.4,410.6 194.8,410.7 195.8,410.8 196.3,410.9 196.3,411.0M56.7,399.6 57.2,399.3 58.2,399.1 59.7,398.8 61.6,398.6 64.0,398.3 67.0,398.1 70.4,397.9 74.3,397.6 78.7,397.4 83.5,397.3 88.7,397.1 94.3,396.9 100.1,396.8 106.3,396.7 112.6,396.7 119.1,396.6 125.6,396.6 132.1,396.6 138.6,396.7 144.9,396.7 151.1,396.8 156.9,396.9 162.5,397.1 167.7,397.3 172.5,397.4 176.9,397.6 180.8,397.9 184.2,398.1 187.2,398.3 189.6,398.6 191.5,398.8 193.0,399.1 194.0,399.3 194.5,399.6 194.5,399.9M60.3,388.8 60.9,388.4 61.8,388.0 63.2,387.6 65.1,387.2 67.5,386.8 70.3,386.5 73.6,386.1 77.3,385.8 81.4,385.5 86.0,385.2 90.9,384.9 96.1,384.7 101.7,384.5 107.4,384.4 113.4,384.3 119.5,384.2 125.6,384.2 131.7,384.2 137.8,384.3 143.8,384.4 149.5,384.5 155.1,384.7 160.3,384.9 165.2,385.2 169.8,385.5 173.9,385.8 177.6,386.1 180.9,386.5 183.7,386.8 186.1,387.2 188.0,387.6 189.4,388.0 190.3,388.4 190.9,388.8 191.0,389.2M65.6,378.8 66.1,378.3 67.1,377.8 68.4,377.3 70.2,376.8 72.4,376.3 75.1,375.9 78.1,375.4 81.5,375.0 85.4,374.6 89.5,374.3 94.0,374.0 98.8,373.7 103.9,373.5 109.1,373.3 114.5,373.2 120.0,373.1 125.6,373.1 131.2,373.1 136.7,373.2 142.1,373.3 147.3,373.5 152.4,373.7 157.2,374.0 161.7,374.3 165.8,374.6 169.7,375.0 173.1,375.4 176.1,375.9 178.8,376.3 181.0,376.8 182.8,377.3 184.1,377.8 185.1,378.3 185.6,378.8 185.8,379.3M72.9,369.2 73.8,368.7 75.1,368.2 76.7,367.6 78.7,367.1 81.1,366.6 83.8,366.1 86.9,365.7 90.3,365.3 94.0,364.9 98.0,364.6 102.2,364.3 106.6,364.1 111.2,363.9 115.9,363.7 120.7,363.6 125.6,363.6 130.5,363.6 135.3,363.7 140.0,363.9 144.6,364.1 149.0,364.3 153.2,364.6 157.2,364.9 160.9,365.3 164.3,365.7 167.4,366.1 170.1,366.6 172.5,367.1 174.5,367.6 176.1,368.2 177.4,368.7 178.3,369.2 178.9,369.8M80.9,361.5 81.7,361.0 82.9,360.5 84.3,359.9 86.1,359.4 88.2,359.0 90.5,358.5 93.1,358.1 96.0,357.7 99.1,357.3 102.5,357.0 106.0,356.7 109.7,356.5 113.6,356.3 117.5,356.2 121.5,356.1 125.6,356.1 129.7,356.1 133.7,356.2 137.6,356.3 141.5,356.5 145.2,356.7 148.7,357.0 152.1,357.3 155.2,357.7 158.1,358.1 160.7,358.5 163.0,359.0 165.1,359.4 166.9,359.9 168.3,360.5 169.5,361.0 170.3,361.5 170.9,362.1M90.6,354.8 91.6,354.4 92.9,353.9 94.3,353.5 96.0,353.1 97.9,352.7 100.0,352.3 102.3,352.0 104.8,351.7 107.5,351.4 110.2,351.1 113.2,350.9 116.2,350.8 119.3,350.7 122.4,350.6 125.6,350.6 128.8,350.6 131.9,350.7 135.0,350.8 138.0,350.9 141.0,351.1 143.7,351.4 146.4,351.7 148.9,352.0 151.2,352.3 153.3,352.7 155.2,353.1 156.9,353.5 158.3,353.9 159.6,354.4 160.6,354.8 161.3,355.3M102.0,349.7 103.1,349.4 104.3,349.0 105.7,348.7 107.3,348.4 108.9,348.2 110.7,348.0 112.7,347.7 114.7,347.6 116.7,347.4 118.9,347.3 121.1,347.2 123.3,347.2 125.6,347.1 127.9,347.2 130.1,347.2 132.3,347.3 134.5,347.4 136.5,347.6 138.5,347.7 140.5,348.0 142.3,348.2 143.9,348.4 145.5,348.7 146.9,349.0 148.1,349.4 149.2,349.7 150.2,350.0M116.8,346.2 117.9,346.1 119.1,346.0 120.4,345.9 121.6,345.8 122.9,345.7 124.3,345.7 125.6,345.7 126.9,345.7 128.3,345.7 129.6,345.8 130.8,345.9 132.1,346.0 133.3,346.1 134.4,346.2 135.5,346.3" stroke-width="1" opacity="0.42"/></g><g mask="url(#mr)"><path d="M125.6,486.2 125.2,485.0 124.8,483.4 124.4,481.4 124.0,479.1 123.7,476.5 123.3,473.7 123.0,470.6 122.7,467.2 122.4,463.7 122.2,460.0 122.0,456.1 121.8,452.0 121.6,447.9 121.4,443.6 121.3,439.2 121.2,434.8 121.1,430.3 121.1,425.8 121.0,421.2 121.0,416.6 121.0,412.0 121.1,407.4 121.1,402.9 121.2,398.4 121.3,394.0 121.4,389.6 121.6,385.3 121.8,381.2 122.0,377.1 122.2,373.2 122.4,369.5 122.7,366.0 123.0,362.6 123.3,359.5 123.7,356.7 124.0,354.1 124.4,351.8 124.8,349.8 125.2,348.2 125.6,347.0M125.6,486.2 124.3,485.0 123.1,483.4 122.0,481.5 120.9,479.2 119.8,476.6 118.8,473.8 117.9,470.7 117.0,467.3 116.2,463.8 115.5,460.1 114.8,456.2 114.2,452.1 113.6,448.0 113.2,443.7 112.8,439.3 112.5,434.9 112.2,430.4 112.1,425.8 111.9,421.2 111.9,416.6 111.9,412.0 112.1,407.4 112.2,402.8 112.5,398.3 112.8,393.9 113.2,389.5 113.6,385.2 114.2,381.1 114.8,377.0 115.5,373.1 116.2,369.4 117.0,365.9 117.9,362.5 118.8,359.4 119.8,356.6 120.9,354.0 122.0,351.7 123.1,349.8 124.3,348.2 125.6,347.0M125.6,486.2 123.5,485.1 121.5,483.5 119.6,481.6 117.8,479.4 116.1,476.8 114.4,474.0 112.9,470.9 111.4,467.6 110.1,464.1 108.9,460.3 107.8,456.4 106.8,452.4 105.9,448.2 105.1,443.9 104.5,439.5 103.9,435.0 103.5,430.5 103.2,425.9 103.0,421.2 103.0,416.6 103.0,412.0 103.2,407.3 103.5,402.7 103.9,398.2 104.5,393.7 105.1,389.3 105.9,385.0 106.8,380.8 107.8,376.8 108.9,372.9 110.1,369.1 111.4,365.6 112.9,362.3 114.4,359.2 116.1,356.4 117.8,353.8 119.6,351.6 121.5,349.7 123.5,348.1 125.6,347.0M125.6,486.2 122.8,485.1 120.1,483.7 117.4,481.8 114.9,479.6 112.5,477.1 110.2,474.3 108.1,471.3 106.1,468.0 104.2,464.4 102.6,460.7 101.0,456.8 99.6,452.7 98.4,448.5 97.3,444.2 96.4,439.7 95.7,435.2 95.1,430.6 94.7,426.0 94.4,421.3 94.4,416.6 94.4,411.9 94.7,407.2 95.1,402.6 95.7,398.0 96.4,393.5 97.3,389.0 98.4,384.7 99.6,380.5 101.0,376.4 102.6,372.5 104.2,368.8 106.1,365.2 108.1,361.9 110.2,358.9 112.5,356.1 114.9,353.6 117.4,351.4 120.1,349.5 122.8,348.1 125.6,347.0M125.6,486.2 122.1,485.2 118.7,483.8 115.4,482.1 112.2,480.0 109.2,477.5 106.3,474.8 103.7,471.8 101.1,468.5 98.8,464.9 96.6,461.2 94.7,457.3 92.9,453.2 91.3,448.9 90.0,444.6 88.8,440.1 87.8,435.5 87.1,430.8 86.6,426.1 86.3,421.4 86.2,416.6 86.3,411.8 86.6,407.1 87.1,402.4 87.8,397.7 88.8,393.1 90.0,388.6 91.3,384.3 92.9,380.0 94.7,375.9 96.6,372.0 98.8,368.3 101.1,364.7 103.7,361.4 106.3,358.4 109.2,355.7 112.2,353.2 115.4,351.1 118.7,349.4 122.1,348.0 125.6,347.0M125.6,486.2 121.5,485.3 117.5,484.1 113.6,482.4 109.8,480.4 106.3,478.0 102.9,475.3 99.6,472.3 96.6,469.1 93.8,465.6 91.2,461.8 88.8,457.9 86.7,453.8 84.8,449.5 83.2,445.0 81.8,440.5 80.6,435.8 79.7,431.1 79.1,426.3 78.7,421.5 78.5,416.6 78.7,411.7 79.1,406.9 79.7,402.1 80.6,397.4 81.8,392.7 83.2,388.2 84.8,383.7 86.7,379.4 88.8,375.3 91.2,371.4 93.8,367.6 96.6,364.1 99.6,360.9 102.9,357.9 106.3,355.2 109.8,352.8 113.6,350.8 117.5,349.1 121.5,347.9 125.6,347.0M125.6,486.2 121.0,485.5 116.5,484.3 112.1,482.8 107.8,480.8 103.7,478.5 99.8,475.9 96.1,473.0 92.7,469.8 89.4,466.3 86.4,462.6 83.7,458.6 81.2,454.4 79.0,450.1 77.1,445.6 75.4,441.0 74.1,436.2 73.0,431.4 72.3,426.5 71.8,421.6 71.7,416.6 71.8,411.6 72.3,406.7 73.0,401.8 74.1,397.0 75.4,392.2 77.1,387.6 79.0,383.1 81.2,378.8 83.7,374.6 86.4,370.6 89.4,366.9 92.7,363.4 96.1,360.2 99.8,357.3 103.7,354.7 107.8,352.4 112.1,350.4 116.5,348.9 121.0,347.7 125.6,347.0M125.6,486.2 120.6,485.6 115.7,484.6 110.8,483.2 106.2,481.4 101.7,479.2 97.3,476.6 93.2,473.8 89.4,470.6 85.7,467.1 82.4,463.4 79.3,459.4 76.5,455.2 74.0,450.8 71.8,446.3 70.0,441.5 68.4,436.7 67.2,431.8 66.4,426.8 65.9,421.7 65.7,416.6 65.9,411.5 66.4,406.4 67.2,401.4 68.4,396.5 70.0,391.7 71.8,386.9 74.0,382.4 76.5,378.0 79.3,373.8 82.4,369.8 85.7,366.1 89.4,362.6 93.2,359.4 97.3,356.6 101.7,354.0 106.2,351.8 110.8,350.0 115.7,348.6 120.6,347.6 125.6,347.0M125.6,486.2 120.3,485.8 115.1,484.9 110.0,483.6 105.0,481.9 100.1,479.8 95.5,477.4 91.0,474.6 86.8,471.5 82.9,468.0 79.2,464.3 75.8,460.3 72.7,456.1 70.0,451.6 67.6,447.0 65.5,442.2 63.8,437.2 62.5,432.2 61.6,427.0 61.0,421.8 60.8,416.6 61.0,411.4 61.6,406.2 62.5,401.0 63.8,396.0 65.5,391.0 67.6,386.2 70.0,381.6 72.7,377.1 75.8,372.9 79.2,368.9 82.9,365.2 86.8,361.7 91.0,358.6 95.5,355.8 100.1,353.4 105.0,351.3 110.0,349.6 115.1,348.3 120.3,347.4 125.6,347.0M125.6,486.2 120.2,485.9 114.8,485.2 109.5,484.1 104.2,482.5 99.2,480.6 94.3,478.2 89.6,475.5 85.2,472.4 81.0,469.0 77.0,465.3 73.4,461.3 70.1,457.0 67.2,452.5 64.6,447.8 62.3,442.9 60.5,437.8 59.1,432.6 58.0,427.3 57.4,422.0 57.2,416.6 57.4,411.2 58.0,405.9 59.1,400.6 60.5,395.4 62.3,390.3 64.6,385.4 67.2,380.7 70.1,376.2 73.4,371.9 77.0,367.9 81.0,364.2 85.2,360.8 89.6,357.7 94.3,355.0 99.2,352.6 104.2,350.7 109.5,349.1 114.8,348.0 120.2,347.3 125.6,347.0M125.6,486.2 120.1,486.1 114.7,485.5 109.3,484.5 104.0,483.1 98.9,481.3 93.9,479.1 89.0,476.4 84.4,473.4 80.1,470.1 76.0,466.4 72.2,462.3 68.7,458.0 65.6,453.5 62.9,448.6 60.6,443.6 58.6,438.4 57.1,433.1 56.0,427.7 55.3,422.1 55.1,416.6 55.3,411.1 56.0,405.5 57.1,400.1 58.6,394.8 60.6,389.6 62.9,384.6 65.6,379.7 68.7,375.2 72.2,370.9 76.0,366.8 80.1,363.1 84.4,359.8 89.0,356.8 93.9,354.1 98.9,351.9 104.0,350.1 109.3,348.7 114.7,347.7 120.1,347.1 125.6,347.0M125.6,486.2 120.3,486.3 114.9,485.9 109.6,485.0 104.4,483.8 99.2,482.1 94.2,479.9 89.4,477.4 84.7,474.5 80.3,471.1 76.1,467.5 72.3,463.4 68.8,459.1 65.6,454.4M68.8,374.1 72.3,369.8 76.1,365.7 80.3,362.1 84.7,358.7 89.4,355.8 94.2,353.3 99.2,351.1 104.4,349.4 109.6,348.2 114.9,347.3 120.3,346.9 125.6,347.0M125.6,486.2 120.5,486.4 115.4,486.2 110.3,485.5 105.3,484.4 100.3,482.8 95.4,480.8 90.6,478.4M95.4,352.4 100.3,350.4 105.3,348.8 110.3,347.7 115.4,347.0 120.5,346.8 125.6,347.0M125.6,486.2 120.9,486.6 116.2,486.5 111.4,485.9 106.7,485.0 102.0,483.5M106.7,348.2 111.4,347.3 116.2,346.7 120.9,346.6 125.6,347.0M125.6,486.2 121.4,486.7 117.2,486.7 112.9,486.3 108.6,485.5M112.9,346.9 117.2,346.5 121.4,346.5 125.6,347.0M125.6,486.2 122.0,486.8 118.4,487.0 114.7,486.7 111.0,486.0M114.7,346.5 118.4,346.2 122.0,346.4 125.6,347.0M125.6,486.2 122.7,486.9 119.8,487.2 116.8,487.0M119.8,346.0 122.7,346.3 125.6,347.0M125.6,486.2 123.5,487.0 121.3,487.3 119.1,487.2M121.3,345.9 123.5,346.2 125.6,347.0M125.6,486.2 124.3,487.1 123.0,487.5 121.6,487.4M123.0,345.7 124.3,346.1 125.6,347.0M125.6,486.2 125.2,487.1 124.7,487.5 124.3,487.5M124.7,345.7 125.2,346.1 125.6,347.0M125.6,486.2 126.0,487.1 126.5,487.5 126.9,487.5M126.5,345.7 126.0,346.1 125.6,347.0M125.6,486.2 126.9,487.1 128.2,487.5 129.6,487.4M128.2,345.7 126.9,346.1 125.6,347.0M125.6,486.2 127.7,487.0 129.9,487.3 132.1,487.2M129.9,345.9 127.7,346.2 125.6,347.0M125.6,486.2 128.5,486.9 131.4,487.2 134.4,487.0M131.4,346.0 128.5,346.3 125.6,347.0M125.6,486.2 129.2,486.8 132.8,487.0 136.5,486.7 140.2,486.0M136.5,346.5 132.8,346.2 129.2,346.4 125.6,347.0M125.6,486.2 129.8,486.7 134.0,486.7 138.3,486.3 142.6,485.5M138.3,346.9 134.0,346.5 129.8,346.5 125.6,347.0M125.6,486.2 130.3,486.6 135.0,486.5 139.8,485.9 144.5,485.0 149.2,483.5M144.5,348.2 139.8,347.3 135.0,346.7 130.3,346.6 125.6,347.0M125.6,486.2 130.7,486.4 135.8,486.2 140.9,485.5 145.9,484.4 150.9,482.8 155.8,480.8 160.6,478.4M155.8,352.4 150.9,350.4 145.9,348.8 140.9,347.7 135.8,347.0 130.7,346.8 125.6,347.0M125.6,486.2 130.9,486.3 136.3,485.9 141.6,485.0 146.8,483.8 152.0,482.1 157.0,479.9 161.8,477.4 166.5,474.5 170.9,471.1 175.1,467.5 178.9,463.4 182.4,459.1 185.6,454.4M182.4,374.1 178.9,369.8 175.1,365.7 170.9,362.1 166.5,358.7 161.8,355.8 157.0,353.3 152.0,351.1 146.8,349.4 141.6,348.2 136.3,347.3 130.9,346.9 125.6,347.0M125.6,486.2 131.1,486.1 136.5,485.5 141.9,484.5 147.2,483.1 152.3,481.3 157.3,479.1 162.2,476.4 166.8,473.4 171.1,470.1 175.2,466.4 179.0,462.3 182.5,458.0 185.6,453.5 188.3,448.6 190.6,443.6 192.6,438.4 194.1,433.1 195.2,427.7 195.9,422.1 196.1,416.6 195.9,411.1 195.2,405.5 194.1,400.1 192.6,394.8 190.6,389.6 188.3,384.6 185.6,379.7 182.5,375.2 179.0,370.9 175.2,366.8 171.1,363.1 166.8,359.8 162.2,356.8 157.3,354.1 152.3,351.9 147.2,350.1 141.9,348.7 136.5,347.7 131.1,347.1 125.6,347.0M125.6,486.2 131.0,485.9 136.4,485.2 141.7,484.1 147.0,482.5 152.0,480.6 156.9,478.2 161.6,475.5 166.0,472.4 170.2,469.0 174.2,465.3 177.8,461.3 181.1,457.0 184.0,452.5 186.6,447.8 188.9,442.9 190.7,437.8 192.1,432.6 193.2,427.3 193.8,422.0 194.0,416.6 193.8,411.2 193.2,405.9 192.1,400.6 190.7,395.4 188.9,390.3 186.6,385.4 184.0,380.7 181.1,376.2 177.8,371.9 174.2,367.9 170.2,364.2 166.0,360.8 161.6,357.7 156.9,355.0 152.0,352.6 147.0,350.7 141.7,349.1 136.4,348.0 131.0,347.3 125.6,347.0M125.6,486.2 130.9,485.8 136.1,484.9 141.2,483.6 146.2,481.9 151.1,479.8 155.7,477.4 160.2,474.6 164.4,471.5 168.3,468.0 172.0,464.3 175.4,460.3 178.5,456.1 181.2,451.6 183.6,447.0 185.7,442.2 187.4,437.2 188.7,432.2 189.6,427.0 190.2,421.8 190.4,416.6 190.2,411.4 189.6,406.2 188.7,401.0 187.4,396.0 185.7,391.0 183.6,386.2 181.2,381.6 178.5,377.1 175.4,372.9 172.0,368.9 168.3,365.2 164.4,361.7 160.2,358.6 155.7,355.8 151.1,353.4 146.2,351.3 141.2,349.6 136.1,348.3 130.9,347.4 125.6,347.0M125.6,486.2 130.6,485.6 135.5,484.6 140.4,483.2 145.0,481.4 149.5,479.2 153.9,476.6 158.0,473.8 161.8,470.6 165.5,467.1 168.8,463.4 171.9,459.4 174.7,455.2 177.2,450.8 179.4,446.3 181.2,441.5 182.8,436.7 184.0,431.8 184.8,426.8 185.3,421.7 185.5,416.6 185.3,411.5 184.8,406.4 184.0,401.4 182.8,396.5 181.2,391.7 179.4,386.9 177.2,382.4 174.7,378.0 171.9,373.8 168.8,369.8 165.5,366.1 161.8,362.6 158.0,359.4 153.9,356.6 149.5,354.0 145.0,351.8 140.4,350.0 135.5,348.6 130.6,347.6 125.6,347.0M125.6,486.2 130.2,485.5 134.7,484.3 139.1,482.8 143.4,480.8 147.5,478.5 151.4,475.9 155.1,473.0 158.5,469.8 161.8,466.3 164.8,462.6 167.5,458.6 170.0,454.4 172.2,450.1 174.1,445.6 175.8,441.0 177.1,436.2 178.2,431.4 178.9,426.5 179.4,421.6 179.5,416.6 179.4,411.6 178.9,406.7 178.2,401.8 177.1,397.0 175.8,392.2 174.1,387.6 172.2,383.1 170.0,378.8 167.5,374.6 164.8,370.6 161.8,366.9 158.5,363.4 155.1,360.2 151.4,357.3 147.5,354.7 143.4,352.4 139.1,350.4 134.7,348.9 130.2,347.7 125.6,347.0M125.6,486.2 129.7,485.3 133.7,484.1 137.6,482.4 141.4,480.4 144.9,478.0 148.3,475.3 151.6,472.3 154.6,469.1 157.4,465.6 160.0,461.8 162.4,457.9 164.5,453.8 166.4,449.5 168.0,445.0 169.4,440.5 170.6,435.8 171.5,431.1 172.1,426.3 172.5,421.5 172.7,416.6 172.5,411.7 172.1,406.9 171.5,402.1 170.6,397.4 169.4,392.7 168.0,388.2 166.4,383.7 164.5,379.4 162.4,375.3 160.0,371.4 157.4,367.6 154.6,364.1 151.6,360.9 148.3,357.9 144.9,355.2 141.4,352.8 137.6,350.8 133.7,349.1 129.7,347.9 125.6,347.0M125.6,486.2 129.1,485.2 132.5,483.8 135.8,482.1 139.0,480.0 142.0,477.5 144.9,474.8 147.5,471.8 150.1,468.5 152.4,464.9 154.6,461.2 156.5,457.3 158.3,453.2 159.9,448.9 161.2,444.6 162.4,440.1 163.4,435.5 164.1,430.8 164.6,426.1 164.9,421.4 165.0,416.6 164.9,411.8 164.6,407.1 164.1,402.4 163.4,397.7 162.4,393.1 161.2,388.6 159.9,384.3 158.3,380.0 156.5,375.9 154.6,372.0 152.4,368.3 150.1,364.7 147.5,361.4 144.9,358.4 142.0,355.7 139.0,353.2 135.8,351.1 132.5,349.4 129.1,348.0 125.6,347.0M125.6,486.2 128.4,485.1 131.1,483.7 133.8,481.8 136.3,479.6 138.7,477.1 141.0,474.3 143.1,471.3 145.1,468.0 147.0,464.4 148.6,460.7 150.2,456.8 151.6,452.7 152.8,448.5 153.9,444.2 154.8,439.7 155.5,435.2 156.1,430.6 156.5,426.0 156.8,421.3 156.8,416.6 156.8,411.9 156.5,407.2 156.1,402.6 155.5,398.0 154.8,393.5 153.9,389.0 152.8,384.7 151.6,380.5 150.2,376.4 148.6,372.5 147.0,368.8 145.1,365.2 143.1,361.9 141.0,358.9 138.7,356.1 136.3,353.6 133.8,351.4 131.1,349.5 128.4,348.1 125.6,347.0M125.6,486.2 127.7,485.1 129.7,483.5 131.6,481.6 133.4,479.4 135.1,476.8 136.8,474.0 138.3,470.9 139.8,467.6 141.1,464.1 142.3,460.3 143.4,456.4 144.4,452.4 145.3,448.2 146.1,443.9 146.7,439.5 147.3,435.0 147.7,430.5 148.0,425.9 148.2,421.2 148.2,416.6 148.2,412.0 148.0,407.3 147.7,402.7 147.3,398.2 146.7,393.7 146.1,389.3 145.3,385.0 144.4,380.8 143.4,376.8 142.3,372.9 141.1,369.1 139.8,365.6 138.3,362.3 136.8,359.2 135.1,356.4 133.4,353.8 131.6,351.6 129.7,349.7 127.7,348.1 125.6,347.0M125.6,486.2 126.9,485.0 128.1,483.4 129.2,481.5 130.3,479.2 131.4,476.6 132.4,473.8 133.3,470.7 134.2,467.3 135.0,463.8 135.7,460.1 136.4,456.2 137.0,452.1 137.6,448.0 138.0,443.7 138.4,439.3 138.7,434.9 139.0,430.4 139.1,425.8 139.3,421.2 139.3,416.6 139.3,412.0 139.1,407.4 139.0,402.8 138.7,398.3 138.4,393.9 138.0,389.5 137.6,385.2 137.0,381.1 136.4,377.0 135.7,373.1 135.0,369.4 134.2,365.9 133.3,362.5 132.4,359.4 131.4,356.6 130.3,354.0 129.2,351.7 128.1,349.8 126.9,348.2 125.6,347.0M125.6,486.2 126.0,485.0 126.4,483.4 126.8,481.4 127.2,479.1 127.5,476.5 127.9,473.7 128.2,470.6 128.5,467.2 128.8,463.7 129.0,460.0 129.2,456.1 129.4,452.0 129.6,447.9 129.8,443.6 129.9,439.2 130.0,434.8 130.1,430.3 130.1,425.8 130.2,421.2 130.2,416.6 130.2,412.0 130.1,407.4 130.1,402.9 130.0,398.4 129.9,394.0 129.8,389.6 129.6,385.3 129.4,381.2 129.2,377.1 129.0,373.2 128.8,369.5 128.5,366.0 128.2,362.6 127.9,359.5 127.5,356.7 127.2,354.1 126.8,351.8 126.4,349.8 126.0,348.2 125.6,347.0" stroke-width="0.8" opacity="0.16"/><path d="M65.6,454.4 62.8,449.5 60.3,444.4 58.3,439.1 56.7,433.6 55.6,428.0 54.9,422.3 54.7,416.6 54.9,410.9 55.6,405.2 56.7,399.6 58.3,394.1 60.3,388.8 62.8,383.7 65.6,378.8 68.8,374.1M90.6,478.4 86.1,475.5 81.7,472.2 77.6,468.5 73.8,464.5 70.3,460.1 67.1,455.4 64.2,450.4 61.8,445.2 59.8,439.7 58.2,434.1 57.1,428.3 56.4,422.5 56.1,416.6 56.4,410.7 57.1,404.9 58.2,399.1 59.8,393.5 61.8,388.0 64.2,382.8 67.1,377.8 70.3,373.1 73.8,368.7 77.6,364.7 81.7,361.0 86.1,357.7 90.6,354.8 95.4,352.4M102.0,483.5 97.4,481.6 92.9,479.3 88.5,476.5 84.3,473.3 80.4,469.6 76.7,465.6 73.3,461.2 70.2,456.4 67.5,451.3 65.1,446.0 63.2,440.4 61.6,434.6 60.5,428.7 59.8,422.7 59.6,416.6 59.8,410.5 60.5,404.5 61.6,398.6 63.2,392.8 65.1,387.2 67.5,381.9 70.2,376.8 73.3,372.0 76.7,367.6 80.4,363.6 84.3,359.9 88.5,356.7 92.9,353.9 97.4,351.6 102.0,349.7 106.7,348.2M108.6,485.5 104.3,484.2 100.1,482.4 96.0,480.1 92.0,477.4 88.2,474.2 84.5,470.6 81.1,466.6 77.9,462.1 75.1,457.3 72.5,452.2 70.3,446.7 68.4,441.0 67.0,435.1 65.9,429.0 65.3,422.8 65.1,416.6 65.3,410.4 65.9,404.2 67.0,398.1 68.4,392.2 70.3,386.5 72.5,381.0 75.1,375.9 77.9,371.1 81.1,366.6 84.5,362.6 88.2,359.0 92.0,355.8 96.0,353.1 100.1,350.8 104.3,349.0 108.6,347.7 112.9,346.9M111.0,486.0 107.3,484.8 103.6,483.1 100.0,480.9 96.5,478.2 93.1,475.1 89.9,471.5 86.9,467.5 84.1,463.0 81.5,458.2 79.3,453.0 77.3,447.4 75.6,441.6 74.3,435.6 73.4,429.3 72.8,423.0 72.6,416.6 72.8,410.2 73.4,403.9 74.3,397.6 75.6,391.6 77.3,385.8 79.3,380.2 81.5,375.0 84.1,370.2 86.9,365.7 89.9,361.7 93.1,358.1 96.5,355.0 100.0,352.3 103.6,350.1 107.3,348.4 111.0,347.2 114.7,346.5M116.8,487.0 113.8,486.4 110.7,485.2 107.8,483.6 104.8,481.5 101.9,479.0 99.1,475.9 96.5,472.3 94.0,468.3 91.7,463.8 89.5,458.9 87.6,453.6 86.0,448.0 84.6,442.1 83.5,435.9 82.7,429.6 82.2,423.1 82.1,416.6 82.2,410.1 82.7,403.6 83.5,397.3 84.6,391.1 86.0,385.2 87.6,379.6 89.5,374.3 91.7,369.4 94.0,364.9 96.5,360.9 99.1,357.3 101.9,354.2 104.8,351.7 107.8,349.6 110.7,348.0 113.8,346.8 116.8,346.2 119.8,346.0M119.1,487.2 116.9,486.7 114.7,485.6 112.4,484.1 110.2,482.1 108.1,479.5 106.0,476.5 104.0,472.9 102.2,468.9 100.4,464.4 98.8,459.5 97.4,454.2 96.1,448.5 95.1,442.5 94.3,436.3 93.7,429.8 93.3,423.2 93.2,416.6 93.3,410.0 93.7,403.4 94.3,396.9 95.1,390.7 96.1,384.7 97.4,379.0 98.8,373.7 100.4,368.8 102.2,364.3 104.0,360.3 106.0,356.7 108.1,353.7 110.2,351.1 112.4,349.1 114.7,347.6 116.9,346.5 119.1,346.0 121.3,345.9M121.6,487.4 120.3,486.9 118.9,485.9 117.5,484.4 116.2,482.4 114.9,479.9 113.6,476.9 112.4,473.4 111.2,469.3 110.1,464.8 109.1,459.9 108.2,454.5 107.4,448.8 106.8,442.8 106.3,436.5 105.9,430.0 105.7,423.3 105.6,416.6 105.7,409.9 105.9,403.2 106.3,396.7 106.8,390.4 107.4,384.4 108.2,378.7 109.1,373.3 110.1,368.4 111.2,363.9 112.4,359.8 113.6,356.3 114.9,353.3 116.2,350.8 117.5,348.8 118.9,347.3 120.3,346.3 121.6,345.8 123.0,345.7M124.3,487.5 123.8,487.0 123.3,486.0 122.9,484.6 122.4,482.6 122.0,480.1 121.5,477.1 121.1,473.6 120.7,469.6 120.4,465.1 120.0,460.1 119.7,454.7 119.5,449.0 119.2,442.9 119.1,436.6 118.9,430.0 118.9,423.4 118.8,416.6 118.9,409.8 118.9,403.2 119.1,396.6 119.2,390.3 119.5,384.2 119.7,378.5 120.0,373.1 120.4,368.1 120.7,363.6 121.1,359.6 121.5,356.1 122.0,353.1 122.4,350.6 122.9,348.6 123.3,347.2 123.8,346.2 124.3,345.7 124.7,345.7M126.9,487.5 127.4,487.0 127.9,486.0 128.3,484.6 128.8,482.6 129.2,480.1 129.7,477.1 130.1,473.6 130.5,469.6 130.8,465.1 131.2,460.1 131.5,454.7 131.7,449.0 132.0,442.9 132.1,436.6 132.3,430.0 132.3,423.4 132.4,416.6 132.3,409.8 132.3,403.2 132.1,396.6 132.0,390.3 131.7,384.2 131.5,378.5 131.2,373.1 130.8,368.1 130.5,363.6 130.1,359.6 129.7,356.1 129.2,353.1 128.8,350.6 128.3,348.6 127.9,347.2 127.4,346.2 126.9,345.7 126.5,345.7M129.6,487.4 130.9,486.9 132.3,485.9 133.7,484.4 135.0,482.4 136.3,479.9 137.6,476.9 138.8,473.4 140.0,469.3 141.1,464.8 142.1,459.9 143.0,454.5 143.8,448.8 144.4,442.8 144.9,436.5 145.3,430.0 145.5,423.3 145.6,416.6 145.5,409.9 145.3,403.2 144.9,396.7 144.4,390.4 143.8,384.4 143.0,378.7 142.1,373.3 141.1,368.4 140.0,363.9 138.8,359.8 137.6,356.3 136.3,353.3 135.0,350.8 133.7,348.8 132.3,347.3 130.9,346.3 129.6,345.8 128.2,345.7M132.1,487.2 134.3,486.7 136.5,485.6 138.8,484.1 141.0,482.1 143.1,479.5 145.2,476.5 147.2,472.9 149.0,468.9 150.8,464.4 152.4,459.5 153.8,454.2 155.1,448.5 156.1,442.5 156.9,436.3 157.5,429.8 157.9,423.2 158.0,416.6 157.9,410.0 157.5,403.4 156.9,396.9 156.1,390.7 155.1,384.7 153.8,379.0 152.4,373.7 150.8,368.8 149.0,364.3 147.2,360.3 145.2,356.7 143.1,353.7 141.0,351.1 138.8,349.1 136.5,347.6 134.3,346.5 132.1,346.0 129.9,345.9M134.4,487.0 137.4,486.4 140.5,485.2 143.4,483.6 146.4,481.5 149.3,479.0 152.1,475.9 154.7,472.3 157.2,468.3 159.5,463.8 161.7,458.9 163.6,453.6 165.2,448.0 166.6,442.1 167.7,435.9 168.5,429.6 169.0,423.1 169.1,416.6 169.0,410.1 168.5,403.6 167.7,397.3 166.6,391.1 165.2,385.2 163.6,379.6 161.7,374.3 159.5,369.4 157.2,364.9 154.7,360.9 152.1,357.3 149.3,354.2 146.4,351.7 143.4,349.6 140.5,348.0 137.4,346.8 134.4,346.2 131.4,346.0M140.2,486.0 143.9,484.8 147.6,483.1 151.2,480.9 154.7,478.2 158.1,475.1 161.3,471.5 164.3,467.5 167.1,463.0 169.7,458.2 171.9,453.0 173.9,447.4 175.6,441.6 176.9,435.6 177.8,429.3 178.4,423.0 178.6,416.6 178.4,410.2 177.8,403.9 176.9,397.6 175.6,391.6 173.9,385.8 171.9,380.2 169.7,375.0 167.1,370.2 164.3,365.7 161.3,361.7 158.1,358.1 154.7,355.0 151.2,352.3 147.6,350.1 143.9,348.4 140.2,347.2 136.5,346.5M142.6,485.5 146.9,484.2 151.1,482.4 155.2,480.1 159.2,477.4 163.0,474.2 166.7,470.6 170.1,466.6 173.3,462.1 176.1,457.3 178.7,452.2 180.9,446.7 182.8,441.0 184.2,435.1 185.3,429.0 185.9,422.8 186.1,416.6 185.9,410.4 185.3,404.2 184.2,398.1 182.8,392.2 180.9,386.5 178.7,381.0 176.1,375.9 173.3,371.1 170.1,366.6 166.7,362.6 163.0,359.0 159.2,355.8 155.2,353.1 151.1,350.8 146.9,349.0 142.6,347.7 138.3,346.9M149.2,483.5 153.8,481.6 158.3,479.3 162.7,476.5 166.9,473.3 170.8,469.6 174.5,465.6 177.9,461.2 181.0,456.4 183.7,451.3 186.1,446.0 188.0,440.4 189.6,434.6 190.7,428.7 191.4,422.7 191.6,416.6 191.4,410.5 190.7,404.5 189.6,398.6 188.0,392.8 186.1,387.2 183.7,381.9 181.0,376.8 177.9,372.0 174.5,367.6 170.8,363.6 166.9,359.9 162.7,356.7 158.3,353.9 153.8,351.6 149.2,349.7 144.5,348.2M160.6,478.4 165.1,475.5 169.5,472.2 173.6,468.5 177.4,464.5 180.9,460.1 184.1,455.4 187.0,450.4 189.4,445.2 191.4,439.7 193.0,434.1 194.1,428.3 194.8,422.5 195.1,416.6 194.8,410.7 194.1,404.9 193.0,399.1 191.4,393.5 189.4,388.0 187.0,382.8 184.1,377.8 180.9,373.1 177.4,368.7 173.6,364.7 169.5,361.0 165.1,357.7 160.6,354.8 155.8,352.4M185.6,454.4 188.4,449.5 190.9,444.4 192.9,439.1 194.5,433.6 195.6,428.0 196.3,422.3 196.5,416.6 196.3,410.9 195.6,405.2 194.5,399.6 192.9,394.1 190.9,388.8 188.4,383.7 185.6,378.8 182.4,374.1" stroke-width="1" opacity="0.42"/></g></g><path d="M125.3,355V478.4" stroke="#e6e6e6" stroke-width="1.5"/></g></g></svg><div style="position:absolute;left:250px;top:190px;width:4.2px;height:407px;background:#e9e9e9"></div><div style="position:absolute;left:254px;top:193.5px;width:543.5px;height:403px;border:1px solid #c6c6c6;border-right:none;box-sizing:border-box;background:#f0f0f0"></div><svg style="position:absolute;left:259px;top:254px;overflow:visible" width="503" height="251"><g transform="translate(0.5,0.2)"><rect width="501.5" height="250.1" fill="#000"/><path d="M6.35,0V248.3M18.85,0V248.3M31.35,0V248.3M43.85,0V248.3M56.35,0V248.3M68.85,0V248.3M81.35,0V248.3M93.85,0V248.3M106.35,0V248.3M118.85,0V248.3M131.35,0V248.3M143.85,0V248.3M156.35,0V248.3M168.85,0V248.3M181.35,0V248.3M193.85,0V248.3M206.35,0V248.3M218.85,0V248.3M231.35,0V248.3M243.85,0V248.3M256.35,0V248.3M268.85,0V248.3M281.35,0V248.3M293.85,0V248.3M306.35,0V248.3M318.85,0V248.3M331.35,0V248.3M343.85,0V248.3M356.35,0V248.3M368.85,0V248.3M381.35,0V248.3M393.85,0V248.3M406.35,0V248.3M418.85,0V248.3M431.35,0V248.3M443.85,0V248.3M456.35,0V248.3M468.85,0V248.3M481.35,0V248.3M493.85,0V248.3" stroke="#a8d0c4" stroke-width="1" opacity="0.48" fill="none"/><path d="M0,6.80H501.5M0,19.15H501.5M0,31.51H501.5M0,43.86H501.5M0,56.21H501.5M0,68.57H501.5M0,80.92H501.5M0,93.27H501.5M0,105.62H501.5M0,117.98H501.5M0,130.33H501.5M0,142.68H501.5M0,155.04H501.5M0,167.39H501.5M0,179.74H501.5M0,192.09H501.5M0,204.45H501.5M0,216.80H501.5M0,229.15H501.5M0,241.51H501.5" stroke="#a8d0c4" stroke-width="1" opacity="0.48" fill="none"/></g></svg><div style="position:absolute;left:778.2px;top:201px;width:3px;height:356px;background:#e8e8e8;border:1px solid #d2d2d2;box-sizing:border-box"></div><svg style="position:absolute;left:790px;top:205px;overflow:visible" width="7" height="353"><g transform="translate(1.5,0)"><path d="M0,0.5h4M1,10.2h2.6M1,19.9h2.6M1,29.7h2.6M1,39.4h2.6M1,49.1h2.6M1,58.8h2.6M1,68.5h2.6M1,78.3h2.6M1,88.0h2.6M1,97.7h2.6M1,107.4h2.6M1,117.1h2.6M1,126.9h2.6M1,136.6h2.6M1,146.3h2.6M1,156.0h2.6M1,165.7h2.6M1,175.5h2.6M1,185.2h2.6M1,194.9h2.6M1,204.6h2.6M1,214.3h2.6M1,224.1h2.6M1,233.8h2.6M1,243.5h2.6M1,253.2h2.6M1,262.9h2.6M1,272.7h2.6M1,282.4h2.6M1,292.1h2.6M1,301.8h2.6M1,311.5h2.6M1,321.3h2.6M1,331.0h2.6M1,340.7h2.6M1,350.4h2.6" stroke="#cfcfcf" stroke-width="1"/></g></svg><svg style="position:absolute;left:772px;top:546px;overflow:visible" width="17" height="11"><g transform="translate(0.5,0.6)"><path d="M0.8,0H10.8L15.6,4.8L10.8,9.6H0.8Q0,9.6 0,8.8V0.8Q0,0 0.8,0z" fill="#0a78d6"/></g></svg><div style="position:absolute;left:262px;top:575.8px;width:498px;height:3px;background:#e8e8e8;border:1px solid #d2d2d2;box-sizing:border-box"></div><svg style="position:absolute;left:265px;top:588px;overflow:visible" width="495" height="6"><g transform="translate(0.75,0)"><path d="M0.50,0v3M7.40,0v3M14.30,0v3M21.20,0v3M28.10,0v3M35.00,0v3M41.90,0v3M48.80,0v3M55.70,0v3M62.60,0v3M69.50,0v3M76.40,0v3M83.30,0v3M90.20,0v3M97.10,0v3M104.00,0v3M110.90,0v3M117.80,0v3M124.70,0v3M131.60,0v3M138.50,0v3M145.40,0v3M152.30,0v3M159.20,0v3M166.10,0v3M173.00,0v3M179.90,0v3M186.80,0v3M193.70,0v3M200.60,0v3M207.50,0v3M214.40,0v3M221.30,0v3M228.20,0v3M235.10,0v3M242.00,0v3M248.90,0v3M255.80,0v3M262.70,0v3M269.60,0v3M276.50,0v3M283.40,0v3M290.30,0v3M297.20,0v3M304.10,0v3M311.00,0v3M317.90,0v3M324.80,0v3M331.70,0v3M338.60,0v3M345.50,0v3M352.40,0v3M359.30,0v3M366.20,0v3M373.10,0v3M380.00,0v3M386.90,0v3M393.80,0v3M400.70,0v3M407.60,0v3M414.50,0v3M421.40,0v3M428.30,0v3M435.20,0v3M442.10,0v3M449.00,0v3M455.90,0v3M462.80,0v3M469.70,0v3M476.60,0v3M483.50,0v3" stroke="#c6c6c6" stroke-width="1"/></g></svg><svg style="position:absolute;left:750px;top:570px;overflow:visible" width="10" height="16"><path d="M0,0.8Q0,0 0.8,0H8.6Q9.4,0 9.4,0.8V10.6L4.7,15.2L0,10.6z" fill="#0a78d6"/></svg><div style="position:absolute;left:754px;top:586.5px;width:1px;height:4.5px;background:#555"></div><div style="position:absolute;left:516.5px;top:598.5px;width:1px;height:17px;background:#dcdcdc"></div><div style="position:absolute;left:650.5px;top:598.5px;width:1px;height:17px;background:#dcdcdc"></div><div class="t" style="left:654.1px;top:601.8px;font-size:10.1px;color:#222;">360.0 x 180.0</div><svg style="position:absolute;left:786px;top:605px;overflow:visible" width="12" height="12"><path d="M8,2h1.4M8,5h1.4M5,5h1.4M8,8h1.4M5,8h1.4M2,8h1.4" stroke="#b0b0b0" stroke-width="1.4"/></svg><div style="position:absolute;left:1px;top:1px;width:798px;height:2.6px;background:linear-gradient(to right,#d6f4ff,#dcfcff 40%,#d2fff2 80%,#d8f6e2);-webkit-mask-image:linear-gradient(to bottom,#000 38%,transparent);mask-image:linear-gradient(to bottom,#000 38%,transparent);"></div><div style="position:absolute;left:1px;top:2px;width:2.6px;height:236px;background:#d8f6ff;-webkit-mask-image:linear-gradient(to right,#000 38%,transparent);mask-image:linear-gradient(to right,#000 38%,transparent);"></div><div style="position:absolute;left:1px;top:596px;width:2.6px;height:21px;background:#ffd6d4;-webkit-mask-image:linear-gradient(to right,#000 38%,transparent);mask-image:linear-gradient(to right,#000 38%,transparent);"></div><div style="position:absolute;left:795.4px;top:2px;width:2.6px;height:615px;background:linear-gradient(to bottom,#e0f4e4,#e4f2e2 50%,#f2f2d6 86%,#ffeaa0);-webkit-mask-image:linear-gradient(to left,#000 38%,transparent);mask-image:linear-gradient(to left,#000 38%,transparent);"></div><div style="position:absolute;left:798px;top:2px;width:1px;height:615px;background:linear-gradient(to bottom,#bfe2cd,#c8dcc3 50%,#e1deb4 88%,#f4d878)"></div><div style="position:absolute;left:1px;top:614.8px;width:798px;height:2.8px;background:linear-gradient(to right,#ffccc8,#fbd6c4 50%,#f4e6c0 85%,#fadc80);-webkit-mask-image:linear-gradient(to top,#000 38%,transparent);mask-image:linear-gradient(to top,#000 38%,transparent);"></div></div></div></div></body></html>
